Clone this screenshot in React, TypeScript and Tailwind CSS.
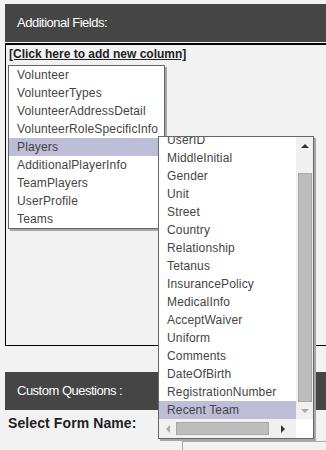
import React from 'react';

const tables = [
    'Volunteer',
    'VolunteerTypes',
    'VolunteerAddressDetail',
    'VolunteerRoleSpecificInfo',
    'Players',
    'AdditionalPlayerInfo',
    'TeamPlayers',
    'UserProfile',
    'Teams',
];

const playerFields = [
    'UserID',
    'MiddleInitial',
    'Gender',
    'Unit',
    'Street',
    'Country',
    'Relationship',
    'Tetanus',
    'InsurancePolicy',
    'MedicalInfo',
    'AcceptWaiver',
    'Uniform',
    'Comments',
    'DateOfBirth',
    'RegistrationNumber',
    'Recent Team',
];

function Arrow({ dir, color }: { dir: 'up' | 'down' | 'left' | 'right'; color: string }) {
    const points = {
        up: '0,5 4,1 8,5',
        down: '0,1 4,5 8,1',
        left: '5,0 1,4 5,8',
        right: '1,0 5,4 1,8',
    }[dir];
    const size = dir === 'up' || dir === 'down' ? { w: 8, h: 6 } : { w: 6, h: 8 };
    return (
        <svg width={size.w} height={size.h} viewBox={`0 0 ${size.w} ${size.h}`}>
            <polygon points={points} fill={color} />
        </svg>
    );
}

function SectionBar({ title }: { title: string }) {
    return (
        <div className="flex h-[38px] items-center bg-[#454545] pl-[12px] text-[13px] tracking-[-0.5px] text-white">
            {title}
        </div>
    );
}

export default function App() {
    return (
        <div className="relative h-[450px] w-[326px] overflow-hidden bg-[#f2f2f2] pl-[5px] pt-[4px] font-['Liberation_Sans',Arial,sans-serif]">
            <SectionBar title="Additional Fields:" />

            <div className="mt-[1px] h-[303px] border-b border-l border-t-2 border-black pl-[1px]">
                <a href="#" className="ml-[2px] mt-[2px] block w-fit text-[12px] font-bold leading-[15px] text-[#222] underline">
                    [Click here to add new column]
                </a>
                <div className="ml-[1px] mt-[3px] w-[157px] border border-[#666] bg-white shadow-[2px_2px_0_#a6a6a6]">
                    {tables.map((name) => (
                        <div
                            key={name}
                            className={`h-[18px] pl-[8px] text-[12px] leading-[18px] tracking-[0.15px] text-[#444] ${name === 'Players' ? 'bg-[#bdbdd8]' : ''}`}
                        >
                            {name}
                        </div>
                    ))}
                </div>
            </div>

            <div className="mt-[26px]">
                <SectionBar title="Custom Questions :" />
            </div>
            <div className="flex items-center">
                <span className="ml-[3px] mt-[4px] text-[14px] font-bold leading-[18px] tracking-[0.1px] text-[#222]">Select Form Name:</span>
            </div>
            <div className="absolute left-[182px] top-[441px] h-[20px] w-[160px] border border-[#aaa] bg-[#f2f2f2]" />

            {/* player fields popup menu */}
            <div className="absolute left-[158px] top-[136px] flex w-[156px] flex-col border border-[#666] bg-white shadow-[2px_2px_0_#a6a6a6]">
                <div className="flex h-[282px]">
                    <div className="w-[137px] overflow-hidden">
                        <div className="-mt-[6px]">
                            {playerFields.map((name) => (
                                <div
                                    key={name}
                                    className={`h-[18px] whitespace-nowrap pl-[8px] text-[12px] leading-[18px] tracking-[0.15px] text-[#444] ${name === 'Recent Team' ? 'bg-[#bdbdd8]' : ''}`}
                                >
                                    {name}
                                </div>
                            ))}
                        </div>
                    </div>
                    <div className="flex w-[17px] flex-col bg-[#f0f0f0]">
                        <div className="flex h-[17px] items-center justify-center">
                            <Arrow dir="up" color="#333" />
                        </div>
                        <div className="flex-1" />
                        <div className="mx-auto h-[229px] w-[14px] border border-[#a8a8a8] bg-[#bdbdbd]" />
                        <div className="flex h-[17px] items-center justify-center">
                            <Arrow dir="down" color="#a8a8a8" />
                        </div>
                    </div>
                </div>
                <div className="flex h-[19px]">
                    <div className="flex w-[137px] items-center bg-[#f0f0f0]">
                        <div className="flex w-[17px] justify-center">
                            <Arrow dir="left" color="#a8a8a8" />
                        </div>
                        <div className="h-[13px] w-[93px] border border-[#a8a8a8] bg-[#bdbdbd]" />
                        <div className="flex flex-1 justify-center">
                            <Arrow dir="right" color="#333" />
                        </div>
                    </div>
                    <div className="w-[17px] bg-white" />
                </div>
            </div>
        </div>
    );
}
